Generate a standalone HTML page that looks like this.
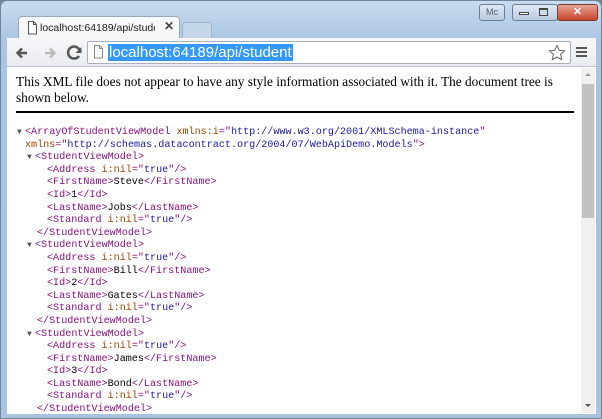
<!DOCTYPE html>
<html><head><style>
*{margin:0;padding:0;box-sizing:border-box}
html,body{width:602px;height:419px;overflow:hidden}
body{background:#6f8599;position:relative;font-family:"Liberation Sans",sans-serif}
.frame{position:absolute;left:1px;top:1px;width:600px;height:417px;border-radius:6px 6px 0 0;background:linear-gradient(#c8dcef,#a9c5e2 40px,#a9c4e0);}
.tab{position:absolute;left:18px;top:16px;width:162px;height:24px;background:linear-gradient(#fbfcfd,#f2f4f6);border:1px solid #9aa9b8;border-bottom:none;border-radius:4px 4px 0 0}
.tab2{position:absolute;left:182px;top:22px;width:30px;height:16px;background:#c5d7ea;border:1px solid #9fb3c8;border-bottom:none;border-radius:3px 3px 0 0}
.tabtxt{position:absolute;left:40px;top:22px;font-size:10.5px;color:#222;width:115px;white-space:nowrap;overflow:hidden}
.x{position:absolute;left:164px;top:19px;font-size:12px;font-weight:bold;color:#444}
.toolbar{position:absolute;left:7px;top:38px;width:589px;height:29px;background:linear-gradient(#f6f7f9,#e9ecef);border-bottom:1px solid #b9c0c8}
.url{position:absolute;left:87px;top:41px;width:484px;height:23px;background:#fff;border:1px solid #a8b0b9;border-radius:2px}
.sel{position:absolute;left:108px;top:44px;height:17px;background:#3399ff;color:#fff;font-size:15px;line-height:17px;padding:0 1px}
.content{position:absolute;left:7px;top:67px;width:589px;height:347px;background:#fff}
.msg{position:absolute;left:16px;top:74px;width:558px;font-family:"Liberation Serif",serif;font-size:13.3px;line-height:16px;color:#000}
.hr{position:absolute;left:16px;top:111px;width:558px;height:2px;background:#000}
.x1{position:absolute;top:127px;left:0;font-family:"Liberation Mono",monospace;font-size:10.1px;line-height:12.6px;color:#000;white-space:nowrap}
.x1 div{position:relative;height:12.6px}
.l0{left:25px}.l1{left:35px}.l2{left:47px}.l1c{left:37px}
.tr{position:absolute;left:-8px;color:#555;font-size:8px}
.t{color:#881280}.a{color:#994500}.v{color:#1a1aa6}
.sb{position:absolute;left:581px;top:68px;width:14px;height:345px;background:#f0f0f0}
.thumb{position:absolute;left:582px;top:84px;width:12px;height:134px;background:#c2c2c2}
.wb{position:absolute;top:4px;height:17px;border:1px solid #6b7f94;border-radius:3px;background:linear-gradient(#dfe9f5,#b9cbe0)}
</style></head><body>
<div class="frame"></div>
<div class="tab"></div><div class="tab2"></div>
<svg style="position:absolute;left:27px;top:21px" width="11" height="14"><path d="M1.5 .5h5l3 3v9.5h-8z M6.5 .5v3h3" fill="#fff" stroke="#555"/></svg>
<div class="tabtxt">localhost:64189/api/stude</div>
<div class="x">✕</div>
<div class="wb" style="left:479px;width:26px;font-size:9px;color:#556;text-align:center;line-height:15px">Mc</div>
<div class="wb" style="left:512px;width:46px"></div>
<div style="position:absolute;left:519px;top:12px;width:10px;height:3px;border:1px solid #444;background:#fff"></div>
<div style="position:absolute;left:539px;top:8px;width:9px;height:8px;border:1px solid #444;border-top-width:2px"></div>
<div class="wb" style="left:557px;width:41px;background:linear-gradient(#e8a393,#c7452f);border-color:#7a3a30;color:#fff;font-size:11px;font-weight:bold;text-align:center;line-height:15px">✕</div>
<div class="toolbar"></div>
<svg style="position:absolute;left:14px;top:44px" width="70" height="18"><path d="M13 9H4M8 4.5L3.5 9 8 13.5" stroke="#555" stroke-width="2.5" fill="none"/><path d="M31 9h9M36 4.5L40.5 9 36 13.5" stroke="#bbb" stroke-width="2.5" fill="none"/><path d="M66 7.5A6 6 0 1 0 65 12" stroke="#555" stroke-width="2.5" fill="none"/><path d="M67.5 3v6h-6z" fill="#555"/></svg>
<div class="url"></div>
<svg style="position:absolute;left:93px;top:45px" width="11" height="14"><path d="M1.5 .5h5l3 3v9.5h-8z M6.5 .5v3h3" fill="#fff" stroke="#888"/></svg>
<div class="sel">localhost:64189/api/student</div>
<svg style="position:absolute;left:548px;top:44px" width="18" height="18"><path d="M9 1.5l2.3 4.8 5.2.6-3.9 3.5 1.1 5.2L9 13l-4.7 2.6 1.1-5.2L1.5 6.9l5.2-.6z" fill="#fff" stroke="#666"/></svg>
<div style="position:absolute;left:576px;top:47px;width:11px;height:2px;background:#555;box-shadow:0 4px #555,0 8px #555"></div>
<div class="content"></div>
<div class="msg">This XML file does not appear to have any style information associated with it. The document tree is shown below.</div>
<div class="hr"></div>
<div class="x1"><div class="l0"><span class="tr">▼</span><span class="t">&lt;ArrayOfStudentViewModel</span> <span class="a">xmlns:i</span><span class="t">="</span><span class="v">http://www.w3.org/2001/XMLSchema-instance</span><span class="t">"</span></div><div class="l0"><span class="a">xmlns</span><span class="t">="</span><span class="v">http://schemas.datacontract.org/2004/07/WebApiDemo.Models</span><span class="t">"&gt;</span></div><div class="l1"><span class="tr">▼</span><span class="t">&lt;StudentViewModel&gt;</span></div><div class="l2"><span class="t">&lt;Address</span> <span class="a">i:nil</span><span class="t">="</span><span class="v">true</span><span class="t">"/&gt;</span></div><div class="l2"><span class="t">&lt;FirstName&gt;</span>Steve<span class="t">&lt;/FirstName&gt;</span></div><div class="l2"><span class="t">&lt;Id&gt;</span>1<span class="t">&lt;/Id&gt;</span></div><div class="l2"><span class="t">&lt;LastName&gt;</span>Jobs<span class="t">&lt;/LastName&gt;</span></div><div class="l2"><span class="t">&lt;Standard</span> <span class="a">i:nil</span><span class="t">="</span><span class="v">true</span><span class="t">"/&gt;</span></div><div class="l1c"><span class="t">&lt;/StudentViewModel&gt;</span></div><div class="l1"><span class="tr">▼</span><span class="t">&lt;StudentViewModel&gt;</span></div><div class="l2"><span class="t">&lt;Address</span> <span class="a">i:nil</span><span class="t">="</span><span class="v">true</span><span class="t">"/&gt;</span></div><div class="l2"><span class="t">&lt;FirstName&gt;</span>Bill<span class="t">&lt;/FirstName&gt;</span></div><div class="l2"><span class="t">&lt;Id&gt;</span>2<span class="t">&lt;/Id&gt;</span></div><div class="l2"><span class="t">&lt;LastName&gt;</span>Gates<span class="t">&lt;/LastName&gt;</span></div><div class="l2"><span class="t">&lt;Standard</span> <span class="a">i:nil</span><span class="t">="</span><span class="v">true</span><span class="t">"/&gt;</span></div><div class="l1c"><span class="t">&lt;/StudentViewModel&gt;</span></div><div class="l1"><span class="tr">▼</span><span class="t">&lt;StudentViewModel&gt;</span></div><div class="l2"><span class="t">&lt;Address</span> <span class="a">i:nil</span><span class="t">="</span><span class="v">true</span><span class="t">"/&gt;</span></div><div class="l2"><span class="t">&lt;FirstName&gt;</span>James<span class="t">&lt;/FirstName&gt;</span></div><div class="l2"><span class="t">&lt;Id&gt;</span>3<span class="t">&lt;/Id&gt;</span></div><div class="l2"><span class="t">&lt;LastName&gt;</span>Bond<span class="t">&lt;/LastName&gt;</span></div><div class="l2"><span class="t">&lt;Standard</span> <span class="a">i:nil</span><span class="t">="</span><span class="v">true</span><span class="t">"/&gt;</span></div><div class="l1c"><span class="t">&lt;/StudentViewModel&gt;</span></div></div>
<div class="sb"></div><div class="thumb"></div>
<div style="position:absolute;left:585px;top:73px;border:3px solid transparent;border-bottom:3px solid #999;border-top:none"></div>
<div style="position:absolute;left:585px;top:404px;border:3px solid transparent;border-top:3px solid #555;border-bottom:none"></div>
</body></html>
